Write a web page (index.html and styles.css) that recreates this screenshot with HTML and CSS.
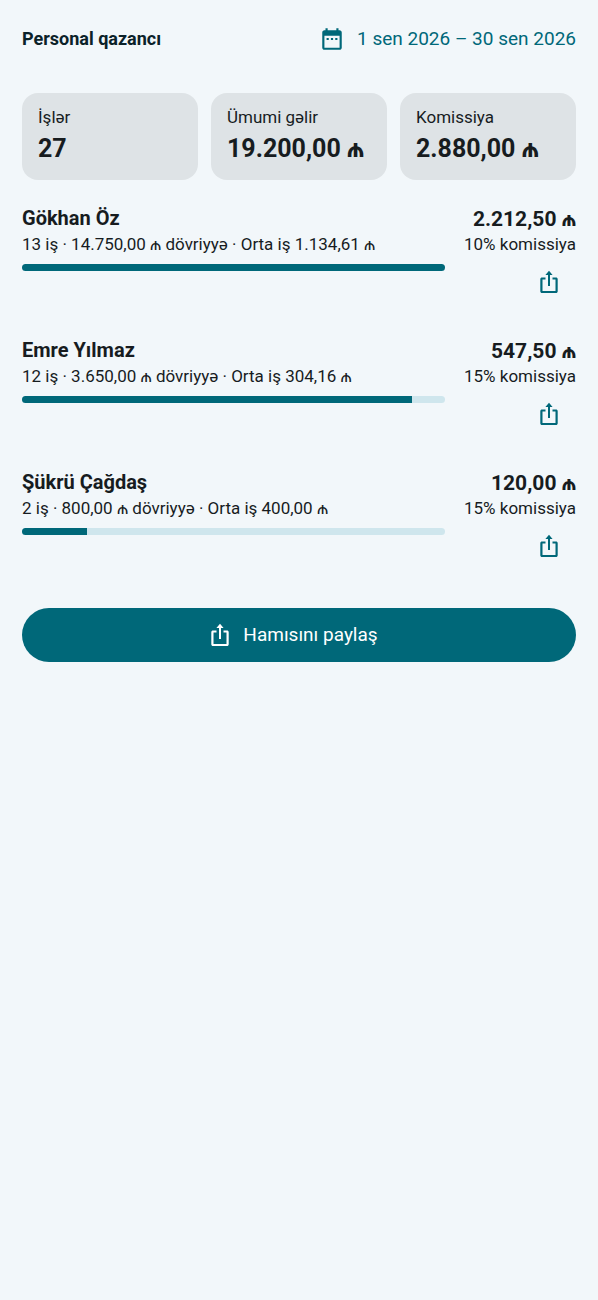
FILE: index.html
```html
<!DOCTYPE html>
<html lang="az">
<head>
<meta charset="utf-8">
<meta name="viewport" content="width=device-width, initial-scale=1">
<title>Personal qazancı</title>
<link rel="stylesheet" href="styles.css">
</head>
<body>
<svg class="sprite" aria-hidden="true">
  <symbol id="share" viewBox="0 0 24 24"><path d="M12 .8l3.6 4.2H13v11h-2V5H8.400zM8.500 7.500v2h-3V21h13V9.500h-3v-2H19c1 0 1.700.7 1.700 1.700v12c0 1-.7 1.800-1.700 1.800H5c-1 0-1.700-.8-1.700-1.800v-12c0-1 .7-1.700 1.700-1.700z"/></symbol>
</svg>
<main class="page">
  <header class="header">
    <h1 class="title">Personal qazancı</h1>
    <button class="range" type="button">
      <svg class="icon icon-calendar" viewBox="0 0 24 24" aria-hidden="true"><path d="M9 11H7v2h2v-2zm4 0h-2v2h2v-2zm4 0h-2v2h2v-2zm2-7h-1V2h-2v2H8V2H6v2H5c-1.11 0-1.99.9-1.99 2L3 20c0 1.1.89 2 2 2h14c1.1 0 2-.9 2-2V6c0-1.1-.9-2-2-2zm0 16H5V9h14v11z"/></svg>
      <span>1 sen 2026 – 30 sen 2026</span>
    </button>
  </header>

  <section class="stats">
    <div class="stat"><span class="stat-label">İşlər</span><strong class="stat-value">27</strong></div>
    <div class="stat"><span class="stat-label">Ümumi gəlir</span><strong class="stat-value">19.200,00 ₼</strong></div>
    <div class="stat"><span class="stat-label">Komissiya</span><strong class="stat-value">2.880,00 ₼</strong></div>
  </section>

  <ul class="staff">
    <li class="member">
      <div class="info">
        <h2 class="name">Gökhan Öz</h2>
        <p class="detail">13 iş · 14.750,00 ₼ dövriyyə · Orta iş 1.134,61 ₼</p>
        <div class="track"><div class="fill" style="width: 100%"></div></div>
      </div>
      <div class="earning">
        <strong class="amount">2.212,50 ₼</strong>
        <span class="rate">10% komissiya</span>
        <button class="share" type="button" aria-label="Paylaş: Gökhan Öz"><svg class="icon"><use href="#share"/></svg></button>
      </div>
    </li>
    <li class="member">
      <div class="info">
        <h2 class="name">Emre Yılmaz</h2>
        <p class="detail">12 iş · 3.650,00 ₼ dövriyyə · Orta iş 304,16 ₼</p>
        <div class="track"><div class="fill" style="width: 92.3%"></div></div>
      </div>
      <div class="earning">
        <strong class="amount">547,50 ₼</strong>
        <span class="rate">15% komissiya</span>
        <button class="share" type="button" aria-label="Paylaş: Emre Yılmaz"><svg class="icon"><use href="#share"/></svg></button>
      </div>
    </li>
    <li class="member">
      <div class="info">
        <h2 class="name">Şükrü Çağdaş</h2>
        <p class="detail">2 iş · 800,00 ₼ dövriyyə · Orta iş 400,00 ₼</p>
        <div class="track"><div class="fill" style="width: 15.4%"></div></div>
      </div>
      <div class="earning">
        <strong class="amount">120,00 ₼</strong>
        <span class="rate">15% komissiya</span>
        <button class="share" type="button" aria-label="Paylaş: Şükrü Çağdaş"><svg class="icon"><use href="#share"/></svg></button>
      </div>
    </li>
  </ul>

  <button class="share-all" type="button"><svg class="icon"><use href="#share"/></svg><span>Hamısını paylaş</span></button>
</main>
</body>
</html>
```
FILE: styles.css
```css
* {
  box-sizing: border-box;
}

body {
  margin: 0;
  background: #f2f7fa;
  color: #171c1f;
  font-family: Roboto, "Noto Sans", sans-serif;
  font-size: 17px;
  line-height: 24px;
}

button {
  border: 0;
  padding: 0;
  background: none;
  color: #006879;
  font: inherit;
  cursor: pointer;
}

h1,
h2,
p,
ul {
  margin: 0;
  padding: 0;
}

.sprite {
  display: none;
}

.icon {
  flex: none;
  width: 24px;
  height: 24px;
  fill: currentColor;
}

.icon-calendar {
  width: 26px;
  height: 26px;
}

.page {
  padding: 16px 22px;
}

.header {
  display: flex;
  align-items: center;
  justify-content: space-between;
  height: 45px;
}

.title {
  color: #0b2229;
  font-size: 18px;
  font-weight: 700;
}

.range {
  display: flex;
  align-items: center;
  gap: 12px;
  font-size: 19px;
}

.stats {
  display: grid;
  grid-template-columns: repeat(3, 1fr);
  gap: 13px;
  margin-top: 32px;
}

.stat {
  display: flex;
  flex-direction: column;
  padding: 12px 16px 11px;
  border-radius: 16px;
  background: #dee3e6;
}

.stat-value {
  font-size: 25px;
  font-weight: 700;
  line-height: 40px;
}

.staff {
  display: grid;
  gap: 28px;
  margin-top: 25px;
  list-style: none;
}

.member {
  display: flex;
  gap: 19px;
}

.info {
  flex: 1;
  min-width: 0;
}

.name {
  font-size: 20px;
  font-weight: 700;
  line-height: 26px;
}

.detail {
  line-height: 26px;
}

.track {
  height: 7px;
  margin-top: 7px;
  overflow: hidden;
  border-radius: 4px;
  background: #cfe6ed;
}

.fill {
  height: 100%;
  background: #006879;
}

.earning {
  display: flex;
  flex-direction: column;
  align-items: flex-end;
}

.amount {
  font-size: 21px;
  font-weight: 700;
  line-height: 28px;
}

.rate {
  line-height: 22px;
}

.share {
  display: grid;
  place-items: center;
  width: 54px;
  height: 54px;
}

.share-all {
  display: flex;
  align-items: center;
  justify-content: center;
  gap: 11px;
  width: 100%;
  height: 54px;
  margin-top: 35px;
  padding-right: 12px;
  border-radius: 27px;
  background: #006879;
  color: #fff;
  font-size: 19px;
}
```
